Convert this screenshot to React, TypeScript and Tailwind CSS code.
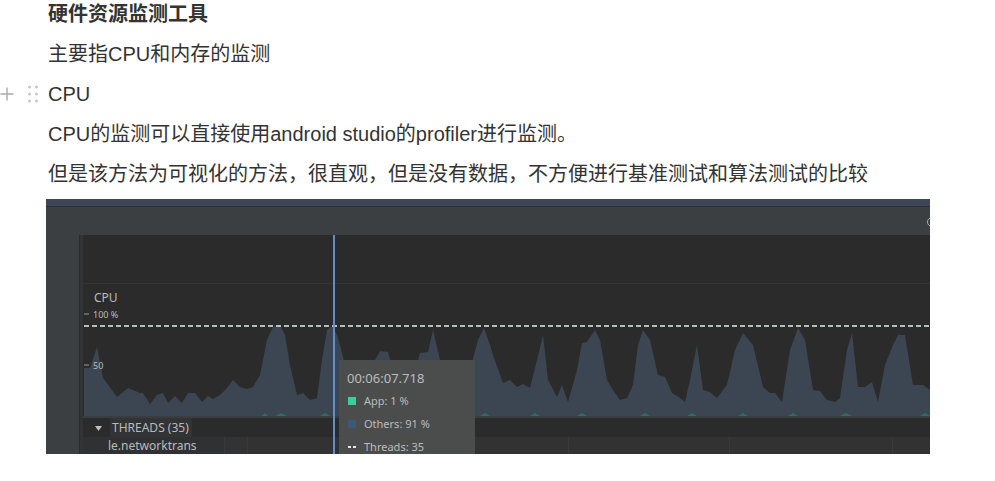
import React from 'react';

const cpuPoints: [number, number][] = [
  [84, 368], [90, 368], [97, 347], [103, 378], [117, 397], [128, 388], [140, 393], [143, 393],
  [150, 404], [157, 395], [163, 393], [168, 403], [175, 396], [182, 403], [188, 393], [195, 393],
  [202, 402], [208, 396], [213, 399], [220, 395], [227, 388], [233, 380], [240, 387], [247, 389],
  [253, 387], [260, 375], [267, 340], [273, 327], [280, 325], [285, 335], [290, 365], [297, 395],
  [303, 393], [310, 400], [317, 398], [322, 360], [327, 330], [332, 326], [337, 335], [340, 345],
  [345, 365], [360, 370], [375, 360], [380, 351], [388, 352], [395, 375], [405, 380], [415, 372],
  [420, 353], [428, 352], [433, 330], [440, 360], [450, 390], [460, 388], [470, 370], [478, 340],
  [484, 328], [490, 345], [493, 355], [503, 383], [510, 380], [517, 387], [523, 384], [530, 388],
  [537, 360], [543, 335], [548, 380], [557, 397], [562, 385], [568, 402], [577, 370], [582, 343],
  [587, 342], [595, 330], [600, 340], [607, 380], [613, 390], [620, 400], [627, 398], [633, 385],
  [638, 345], [643, 330], [650, 340], [658, 375], [665, 377], [672, 393], [680, 398], [685, 402],
  [690, 380], [697, 345], [703, 390], [710, 392], [717, 398], [727, 385], [735, 350], [743, 333],
  [753, 345], [763, 387], [770, 393], [775, 393], [782, 402], [790, 350], [798, 328], [805, 340],
  [813, 390], [820, 391], [827, 400], [835, 402], [840, 398], [847, 350], [852, 333], [858, 387],
  [865, 387], [872, 382], [878, 402], [885, 365], [893, 345], [898, 335], [905, 335], [913, 385],
  [923, 385], [930, 390],
];

// little green "app" bumps sitting on the baseline
const appBumps: [number, number][] = [
  [262, 268], [275, 287], [320, 330], [480, 490], [530, 540], [577, 587], [640, 650],
  [687, 697], [738, 748], [788, 798], [840, 852], [920, 930],
];

const cpuPath =
  'M84 416 ' + cpuPoints.map(([x, y]) => `L${x} ${y}`).join(' ') + ' L930 416 Z';

const PlusIcon = () => (
  <svg width="14" height="14" viewBox="0 0 14 14" className="block">
    <path d="M7 0.5V13.5M0.5 7H13.5" stroke="#aaaaaa" strokeWidth="1.4" />
  </svg>
);

const DragIcon = () => (
  <svg width="12" height="18" viewBox="0 0 12 18" className="block">
    {[2, 9, 16].map((cy) => (
      <React.Fragment key={cy}>
        <circle cx="2.5" cy={cy} r="1.5" fill="#c8c8c8" />
        <circle cx="9.5" cy={cy} r="1.5" fill="#c8c8c8" />
      </React.Fragment>
    ))}
  </svg>
);

const ProfilerShot = () => (
  <div
    className="ml-[46px] mt-[5px] w-[884px] h-[255px] flex flex-col overflow-hidden"
    style={{ fontFamily: '"Noto Sans", "Open Sans", sans-serif' }}
  >
    {/* title strip + toolbar */}
    <div className="h-[7px] bg-[#3d4757]" />
    <div className="h-[1px] bg-[#2e3136]" />
    <div className="h-[28px] bg-[#3c3f41] relative overflow-hidden">
      <div className="absolute right-[-7px] top-[10px] w-[10px] h-[10px] rounded-full border-[1.5px] border-[#a9b0b6]" />
    </div>

    <div className="flex-1 flex min-h-0">
      <div className="w-[33px] bg-[#3c3f41]" />
      <div className="w-[4px] bg-[#313335] border-l border-[#2b2b2b]" />

      <div className="flex-1 flex flex-col relative bg-[#2b2b2b] overflow-hidden">
        <div className="h-[49px] shrink-0 border-b border-[#353535]" />

        {/* CPU chart */}
        <div className="h-[132px] shrink-0 relative">
          <svg
            className="absolute inset-0"
            width="847"
            height="132"
            viewBox="83 284 847 132"
          >
            <path d={cpuPath} fill="#3b4652" />
            {appBumps.map(([a, b]) => (
              <path
                key={a}
                d={`M${a} 416 L${(a + b) / 2} 413 L${b} 416 Z`}
                fill="#2a7258"
              />
            ))}
            <line x1="84" y1="326" x2="930" y2="326" stroke="#e6eeea" strokeWidth="1.5" strokeDasharray="5 3" />
            <line x1="84" y1="314" x2="89" y2="314" stroke="#9a9a9a" strokeWidth="1" />
            <line x1="84" y1="365" x2="89" y2="365" stroke="#9a9a9a" strokeWidth="1" />
          </svg>
          <div className="absolute left-[11px] top-[6px] text-[12px] leading-[16px] text-[#bbbbbb]">CPU</div>
          <div className="absolute left-[10px] top-[25px] text-[9px] leading-[12px] text-[#bbbbbb]">100 %</div>
          <div className="absolute left-[10px] top-[76px] text-[9px] leading-[12px] text-[#bbbbbb]">50</div>
        </div>

        <div className="h-[2px] shrink-0 bg-[#3a3c3e]" />

        {/* threads header */}
        <div className="h-[19px] shrink-0 flex items-end text-[12px] leading-[18px] text-[#bbbbbb]">
          <span className="ml-[12px] w-[15px] h-[18px] flex items-center">
            <svg width="7" height="5" viewBox="0 0 7 5" className="block">
              <path d="M0 0H7L3.5 5Z" fill="#c0c0c0" />
            </svg>
          </span>
          <span className="h-[19px] pt-[1px] bg-[#313335] px-[2px] w-[82px]">THREADS (35)</span>
        </div>

        {/* first thread row */}
        <div className="h-[18px] shrink-0 flex bg-[#323232] text-[12px] text-[#bbbbbb]">
          <div className="w-[141px] bg-[#2f3133] pl-[25px] leading-[18px] whitespace-nowrap">le.networktrans</div>
          <div className="w-[23px] border-l border-[#3a3a3a] bg-[#313335]" />
          <div className="w-[321px] border-l border-[#3a3a3a]" />
          <div className="w-[161px] border-l border-[#3a3a3a]" />
          <div className="w-[163px] border-l border-[#3a3a3a]" />
          <div className="flex-1 border-l border-[#3a3a3a]" />
        </div>

        {/* playhead */}
        <div className="absolute left-[250px] top-0 bottom-0 w-[2px] bg-[#5b8fd4]" />

        {/* tooltip */}
        <div className="absolute left-[256px] top-[125px] w-[136px] h-[110px] bg-[#4b4d4d] px-[8px] pt-[9px] text-[#bbbbbb]">
          <div className="text-[13px] leading-[18px]">00:06:07.718</div>
          <div className="mt-[5px] flex items-center h-[18px] text-[11px]">
            <span className="w-[8px] h-[8px] bg-[#3ccd98] mr-[8px] ml-[1px]" />
            App: 1 %
          </div>
          <div className="mt-[5px] flex items-center h-[18px] text-[11px]">
            <span className="w-[8px] h-[8px] bg-[#3d5878] mr-[8px] ml-[1px]" />
            Others: 91 %
          </div>
          <div className="mt-[5px] flex items-center h-[18px] text-[11px]">
            <span className="flex gap-[2px] mr-[8px] ml-[1px]">
              <span className="w-[3px] h-[2px] bg-[#e8e8e8]" />
              <span className="w-[3px] h-[2px] bg-[#e8e8e8]" />
            </span>
            Threads: 35
          </div>
        </div>
      </div>
    </div>
  </div>
);

export default function App() {
  return (
    <div
      className="w-[995px] h-[481px] bg-white overflow-hidden"
      style={{ fontFamily: '"Liberation Sans", "Noto Sans CJK SC", sans-serif' }}
    >
      <div className="-mt-[6px] text-[20px] leading-[40px] text-[#333333]">
        <div className="pl-[48px] font-bold">硬件资源监测工具</div>
        <div className="pl-[48px]">主要指CPU和内存的监测</div>
        <div className="flex items-center">
          <div className="w-[27px] flex items-center">
            <PlusIcon />
          </div>
          <div className="w-[21px] flex items-center">
            <DragIcon />
          </div>
          <span>CPU</span>
        </div>
        <div className="pl-[48px]">CPU的监测可以直接使用android studio的profiler进行监测。</div>
        <div className="pl-[48px] whitespace-nowrap">
          但是该方法为可视化的方法，很直观，但是没有数据，不方便进行基准测试和算法测试的比较
        </div>
      </div>
      <ProfilerShot />
    </div>
  );
}
